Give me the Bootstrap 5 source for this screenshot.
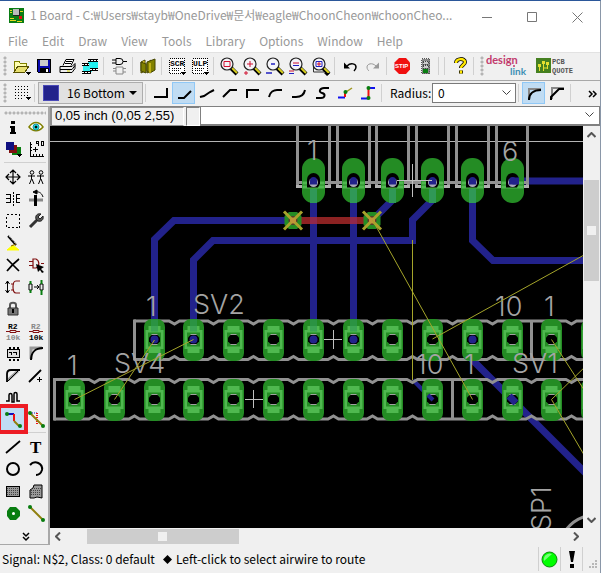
<!DOCTYPE html>
<html lang="en">
<head>
<meta charset="utf-8">
<meta name="viewport" content="width=device-width, initial-scale=1">
<title>1 Board</title>
<link href="https://cdn.jsdelivr.net/npm/bootstrap@5.3.0/dist/css/bootstrap.min.css" rel="stylesheet">
<style>
body{font-family:"Noto Sans CJK KR","Noto Sans",sans-serif;font-size:12px;line-height:16px;color:#000;background:#f0f0f0}
.win{border-top:1px solid #2b579a;border-right:1px solid #8a97a8}
.titlebar{height:29px;background:#fff;color:#999;padding-left:9px}
.titlebar .caption-text{margin-left:6px}
.titlebar button{width:45px;height:28px}
.menus{height:22px;background:#fff;color:#999;padding-left:8px;gap:14px}
.menus a{color:inherit;text-decoration:none}
.tbar{height:28px;border-top:1px solid #e2e2e2}
.tbar2{height:26px;border-top:1px solid #a8a8a8}
button{border:0;background:transparent;padding:0;color:#000}
.tb{width:23px;height:22px;flex:none;display:flex;align-items:center;justify-content:center}
.tb.on{background:#c0dcf3;border:1px solid #90c8f6}
.tb svg,.tp svg{width:20px;height:20px;display:block;overflow:visible}
svg{fill:none;stroke:#000;flex:none}
svg.ns{stroke:none}
.px{shape-rendering:crispEdges}
.vs{width:6px;height:18px;flex:none;background:linear-gradient(90deg,transparent 2px,#d0d0d0 2px,#d0d0d0 3px,transparent 3px)}
.grip{width:9px;height:20px;flex:none;background:radial-gradient(circle at 2px 2px,#b4b4b4 1px,transparent 2px) 3px 0/4px 4px repeat-y}
.layer{width:105px;height:22px;background:#e1e1e1;border:1px solid #adadad;padding-left:4px}
.swatch{width:16px;height:16px;background:#22228b;border:1px solid #4a4ab8;flex:none}
select{appearance:none;border-radius:0;outline:0;color:#000}
.layer select{border:0;background:url("data:image/svg+xml,%3Csvg xmlns='http://www.w3.org/2000/svg' width='8' height='4'%3E%3Cpath d='M0 0h8L4 4z'/%3E%3C/svg%3E") no-repeat right 5px center;padding-left:8px;min-width:0}
.radius-label{padding-left:5px;width:47px;white-space:nowrap}
.radius-box{width:84px;height:20px;border:1px solid #7a7a7a;padding:0 5px;background:#fff url("data:image/svg+xml,%3Csvg xmlns='http://www.w3.org/2000/svg' width='9' height='6'%3E%3Cpath d='M.5.5l4 4 4-4' fill='none' stroke='%23444'/%3E%3C/svg%3E") no-repeat right 4px center}
.palette{width:50px;flex:none;border-top:1px solid #a0a0a0;border-right:2px solid #a8a8a8;border-bottom:1px solid #a8a8a8;padding-left:1px}
.hgrip{width:42px;height:9px;background:radial-gradient(circle at 2px 2px,#b4b4b4 1px,transparent 2px) 0 4px/4px 4px repeat-x;margin-left:3px}
.tp{width:23px;height:22px;display:flex;align-items:center;justify-content:center}
.tp.on{background:#c0dcf3}
.hs{height:6px;width:42px;background:linear-gradient(transparent 2px,#d0d0d0 2px,#d0d0d0 3px,transparent 3px);margin-left:3px}
.marked{outline:4px solid #ed1c24;position:relative}
.cmd{height:20px;border-top:1px solid #808080}
.coord{width:134px;border:1px solid #909090;border-left-width:2px;border-right-color:#fff;font:13px/16px "Liberation Sans",sans-serif;padding-left:3px;white-space:pre}
.gapbox{width:14px;border:1px solid #808080;border-right-color:#fff;border-bottom-color:#fff;margin-left:2px}
.entry{background:#fff;border:1px solid #808080;border-bottom-width:2px;border-top-width:0}
.entry input{border:0;outline:0;min-width:0;background:transparent}
.fit{min-width:0;min-height:0}
.board{background:#000;overflow:hidden}
.board svg{width:100%;height:100%;display:block}
.vbar{width:17px;flex:none;padding:6px 0 5px}
.hbar{height:17px;flex:none;padding:0 21px 0 5px}
.thumb{background:#cdcdcd}
.vbar .thumb{width:15px;height:26%;margin-top:42px}
.hbar .thumb{height:15px;width:29%;margin-left:26px}
.nub{width:9px;height:9px;background:#f0f0f0;display:block}
.statusline{height:28px;padding-left:2px}
.statusline .cell{width:22px;height:24px;border-left:1px solid #d0d0d0}
.statusline .cell:last-child{width:18px}
.t{stroke:#22228b;stroke-width:7}
.aw{stroke:#a5a52a;stroke-width:1}
.silk{stroke:#919191;stroke-width:3}
.lbl{fill:#a4a4a4;stroke:none;font:300 27px Inter,"Liberation Sans",sans-serif}
.mini{font:bold 8px "Liberation Mono",monospace;fill:#000;stroke:none}
.dim{fill:#888}
.stop-t{font:bold 6px "Liberation Sans",sans-serif;fill:#fff;stroke:none}
.dl-a,.dl-b{font:bold 11px/1 Lato,"Liberation Sans",sans-serif;fill:#c23a6c}
.dl-b{font-size:10px;fill:#3e8fb4}
.pq{font:bold 7px/1 "Liberation Mono",monospace;fill:#555}
.big-t{font:bold 17px "Liberation Serif",serif;fill:#000;stroke:none}
</style>
<script src="https://cdn.jsdelivr.net/npm/bootstrap@5.3.0/dist/js/bootstrap.bundle.min.js"></script>
</head>
<body>
<svg width="0" height="0" class="position-absolute">
<defs>
<g id="lens"><path d="M12 12l6 6" stroke="#000" stroke-width="4"/><path d="M13 12l5 5" stroke="#d8d020" stroke-width="2"/><circle cx="8" cy="8" r="6" fill="#f4f4f8" stroke="#222" stroke-width="1.2"/></g>
<g id="pad"><rect x="-10.5" y="-20.5" width="21" height="42" rx="8" fill="#248c24" stroke="none"/><path d="M-6-13.500H6v4h3v19H6v4H-6v-4h-3v-19h3z" fill="#4fb84f" stroke="none"/><rect x="-6.500" y="-7" width="13" height="14" fill="#248c24" stroke="none"/><path d="M-3-5.500h6v11h-6z" fill="#a0a0a0" stroke="none"/><path d="M-3-4.500h6l2.500 2.500v4l-2.500 2.500h-6l-2.500-2.500v-4z" fill="#000" stroke="none"/></g>
<g id="lug"><rect x="-11.500" y="-22.500" width="23" height="45" rx="11" fill="#248c24" stroke="none"/><path d="M-11 2.500h22M-11 6.500h22" stroke="#4fb84f" stroke-width="3"/><path d="M-6.500 7v-8a6.500 6.500 0 0 1 13 0v4l-2 4z" fill="#000" stroke="none"/><circle cy="2" r="4.500" fill="#a9a9b9" stroke="none"/><path d="M-3.500 2v-2a3.500 3.500 0 0 1 7 0v4h-7z" fill="#22228b" stroke="none"/></g>
<g id="via"><path d="M-4-8.500h8l4.500 4v9l-4.500 4h-8l-4.500-4v-9z" fill="#248c24" stroke="none"/><circle r="4.500" fill="#5a3a2a" stroke="none"/><path d="M-9-9L9 9M9-9L-9 9" stroke="#a8a22c" stroke-width="3"/><circle r="3" fill="#c0963a" stroke="none"/></g>
<g id="trk"><path d="M-3.500-20h7v12h-7z" fill="#309858" stroke="none"/></g>
<g id="dot"><circle r="4" fill="#22228b" stroke="none"/></g>
</defs>
</svg>

<div class="win vh-100 d-flex flex-column overflow-hidden">
<header class="titlebar d-flex align-items-center">
  <svg class="px ns" width="15" height="15" viewBox="0 0 15 15"><path fill="#0a7d14" d="M0 0h15v15H0z"/><path fill="#bbb" d="M4 1h6v6H4z"/><path d="M1 2.500h2M1 4.500h2M1 10.500h4M1 12.500h6M8 13.500h5M11 3.500h3" stroke="#e8d820"/><path fill="#e01010" d="M10 8h3v3h-3z"/><path stroke="#222" d="M4 7.500h7M10.500 1v7"/></svg>
  <span class="caption-text text-nowrap flex-grow-1">1 Board - C:₩Users₩stayb₩OneDrive₩문서₩eagle₩ChoonCheon₩choonCheo...</span>
  <button aria-label="Minimize"><svg width="11" height="11"><path d="M0 5.500h10" stroke="#777"/></svg></button>
  <button aria-label="Maximize"><svg width="11" height="11"><path d="M.5.5h9v9h-9z" stroke="#777"/></svg></button>
  <button aria-label="Close"><svg width="11" height="11"><path d="M.5.5l10 10M10.500.5l-10 10" stroke="#777"/></svg></button>
</header>
<nav class="menus d-flex align-items-center"><a href="#">File</a><a href="#">Edit</a><a href="#">Draw</a><a href="#">View</a><a href="#">Tools</a><a href="#">Library</a><a href="#">Options</a><a href="#">Window</a><a href="#">Help</a></nav>

<div class="tbar d-flex align-items-center" role="toolbar" aria-label="Actions">
  <span class="grip"></span>
  <button class="tb" aria-label="Open"><svg viewBox="0 0 20 20" class="px"><path d="M3 16V5h5l1 2h6v3" fill="#ffffb0" stroke="#808000"/><path d="M3 16l4-6h11l-4 6z" fill="#e8e070" stroke="#554f00"/><path d="M14 16h6l-3 3z" fill="#000" stroke="none"/></svg></button>
  <button class="tb" aria-label="Save"><svg viewBox="0 0 20 20" class="px"><path d="M3.500 3.500h13v13h-12l-1-1z" fill="#0a0ab0"/><path d="M6 4h8v6H6z" fill="#ccc" stroke="none"/><path d="M6 12h9v5H6z" fill="#000" stroke="none"/><path d="M12 13h2v3h-2z" fill="#fff" stroke="none"/></svg></button>
  <button class="tb" aria-label="Print"><svg viewBox="0 0 20 20"><path d="M6 9.500l3-6h8l-3 6" fill="#fff"/><path d="M9 5.500h6M8 7.500h6"/><path d="M3 10.500h12l3-3v5l-3 4H3z" fill="#eee"/><path d="M3 13.500h12l3-4M5 16.500h8"/><path d="M10 15h3" stroke="#cc0"/></svg></button>
  <button class="tb" aria-label="CAM"><svg viewBox="0 0 20 20" class="px"><path d="M8 3h10v9H8z" fill="#20f0f0" stroke="none"/><path d="M3 8h9v8H3z" fill="#30f0f0" stroke="none"/><path d="M8 4.500h10" stroke-width="3"/><path d="M8 4.500h10" stroke="#fff" stroke-dasharray="2 1"/><path d="M2 8.500h7M2 16.500h9M10 13.500h8" stroke-width="3"/><path d="M2 8.500h7M2 16.500h9M10 13.500h8" stroke="#fff" stroke-dasharray="2 1"/></svg></button>
  <span class="vs"></span>
  <button class="tb" aria-label="Schematic"><svg viewBox="0 0 20 20"><path d="M7 2.500h4a3 3 0 0 1 0 6H7zM3 4h4M3 7h4M14 5.500h4"/><path d="M7 11h7v7H7zM4 12.500h3M4 15h3M14 12.500h3M14 16h3" stroke="#888"/></svg></button>
  <span class="vs"></span>
  <button class="tb" aria-label="Library"><svg viewBox="0 0 20 20"><path d="M3 6l4-2v11l-4 2zM9 7l4-3v11l-4 2z" fill="#ffe030" stroke="#444400"/><path d="M3 6l5 2v9l-5-2zM9 6l8-3v11l-5 3-3-2z" fill="#808000" stroke="#444400"/><path d="M12 7v10" stroke="#ffe030"/></svg></button>
  <span class="vs"></span>
  <button class="tb" aria-label="Script"><svg viewBox="0 0 20 20" class="px"><path d="M2.500 2.500h15v15h-15z" fill="#fff" stroke-dasharray="1 1"/><path d="M5 12.500h9M5 14.500h7" stroke-dasharray="1 1"/><text class="mini" x="3" y="10">SCR</text><path d="M13 16h6l-3 3z" fill="#000" stroke="none"/></svg></button>
  <button class="tb" aria-label="ULP"><svg viewBox="0 0 20 20" class="px"><path d="M2.500 2.500h15v15h-15z" fill="#fff" stroke-dasharray="1 1"/><path d="M5 12.500h9M5 14.500h7" stroke-dasharray="1 1"/><text class="mini" x="3" y="10">ULP</text><path d="M13 16h6l-3 3z" fill="#000" stroke="none"/></svg></button>
  <span class="vs"></span>
  <button class="tb" aria-label="Zoom fit"><svg viewBox="0 0 20 20"><use href="#lens"/><path d="M5 5.500h6v5H5z" stroke="#d01030"/></svg></button>
  <button class="tb" aria-label="Zoom in"><svg viewBox="0 0 20 20"><use href="#lens"/><path d="M5 8h6M8 5v6M2 17h4M4 15v4" stroke="#d01030"/></svg></button>
  <button class="tb" aria-label="Zoom out"><svg viewBox="0 0 20 20"><use href="#lens"/><path d="M6 8h4M1 17h6" stroke="#2020c0" stroke-width="1.500"/></svg></button>
  <button class="tb" aria-label="Redraw"><svg viewBox="0 0 20 20"><use href="#lens"/><path d="M5 7h6M1 15h5" stroke="#d01030"/><path d="M5 9.500h6M1 17.500h5" stroke="#2020c0"/></svg></button>
  <button class="tb" aria-label="Zoom select"><svg viewBox="0 0 20 20"><path d="M2.500 10v6h11" stroke="#333"/><use href="#lens"/><path d="M5 5.500h6v5H5z" stroke="#2020c0"/><path d="M7 7h2v2H7z" stroke="#d01030"/><path d="M13 17h6l-3 3z" fill="#000" stroke="none"/></svg></button>
  <span class="vs"></span>
  <button class="tb" aria-label="Undo"><svg viewBox="0 0 20 20"><path d="M7 10c4-4 9-2 9 1 0 2-1 3-2 4" stroke-width="1.500"/><path d="M4 6.500v6h6z" fill="#000" stroke="none"/></svg></button>
  <button class="tb" aria-label="Redo"><svg viewBox="0 0 20 20"><path d="M13 10c-4-4-9-2-9 1 0 2 1 3 2 4" stroke="#999"/><path d="M16 6.500v6h-6z" fill="#999" stroke="none"/></svg></button>
  <span class="vs"></span>
  <button class="tb" aria-label="Stop"><svg viewBox="0 0 20 20"><path d="M7 2h7l4 4.500v7L14 18H7l-4.500-4.500v-7z" fill="#f01010" stroke="none"/><text x="3" y="12" class="stop-t">STIP</text></svg></button>
  <button class="tb" aria-label="Go"><svg viewBox="0 0 20 20" class="px"><path d="M6.500 2.500h8v15h-8z" fill="#888" stroke="#555" stroke-dasharray="1 1"/><path d="M8 5h5v3H8zM8 9h5v3H8z" fill="#ccc" stroke="#444" stroke-dasharray="1 1"/><circle cx="10.500" cy="15" r="2.500" fill="#087d10" stroke="none"/></svg></button>
  <span class="vs"></span><span class="vs"></span>
  <button class="tb" aria-label="Help"><svg viewBox="0 0 20 20"><path d="M6 7c0-5 9-5 9-1 0 3-4 3-4 6M11 14.500v3" stroke="#000" stroke-width="4"/><path d="M6 7c0-5 9-5 9-1 0 3-4 3-4 6M11 14.500v3" stroke="#ffe800" stroke-width="2.500"/></svg></button>
  <span class="vs"></span>
  <span class="grip"></span>
  <button aria-label="design link"><svg class="ns d-block" width="46" height="26" viewBox="0 0 46 26"><text x="0" y="11" class="dl-a">design</text><text x="24" y="22" class="dl-b">link</text><circle cx="28" cy="13" r="1" fill="#c23a6c"/></svg></button>
  <button class="ms-1" aria-label="PCB Quote"><svg class="ns d-block" width="42" height="20" viewBox="0 0 42 20"><path fill="#458020" d="M0 2h15v15H0z"/><path d="M3.500 15v-5M7.500 15V8M11.500 13V8M7.500 12h4" stroke="#e4e030"/><path d="M2 8h3v3H2zM6 5h3v3H6zM10 6h3v3h-3z" fill="#e4e030"/><text x="16" y="8" class="pq">PCB</text><text x="16" y="17" class="pq">QUOTE</text></svg></button>
</div>

<div class="tbar2 d-flex align-items-center" role="toolbar" aria-label="Route options">
  <span class="grip"></span>
  <button class="tb" aria-label="Grid"><svg viewBox="0 0 20 20" class="px"><path d="M4 3.500h14M4 6.500h14M4 9.500h14M4 12.500h14M4 15.500h9" stroke-dasharray="1 2"/><path d="M14 14h6l-3 3z" fill="#000" stroke="none"/></svg></button>
  <span class="vs"></span>
  <div class="layer d-flex align-items-center"><span class="swatch"></span><select class="flex-grow-1" aria-label="Layer"><option>16 Bottom</option></select></div>
  <span class="vs"></span>
  <button class="tb" aria-label="Bend 0"><svg viewBox="0 0 20 20"><path d="M3 14h13V5" stroke-width="2"/></svg></button>
  <button class="tb on" aria-label="Bend 1"><svg viewBox="0 0 20 20"><path d="M4 15h6l7-7" stroke-width="2"/></svg></button>
  <button class="tb" aria-label="Bend 2"><svg viewBox="0 0 20 20"><path d="M3 14l4-1 6-4 4-2" stroke-width="2"/></svg></button>
  <button class="tb" aria-label="Bend 3"><svg viewBox="0 0 20 20"><path d="M3 14l7-7h7" stroke-width="2"/></svg></button>
  <button class="tb" aria-label="Bend 4"><svg viewBox="0 0 20 20"><path d="M4 15V7h12" stroke-width="2"/></svg></button>
  <button class="tb" aria-label="Bend 5"><svg viewBox="0 0 20 20"><path d="M3 14c1-5 5-7 8-7h5" stroke-width="2"/></svg></button>
  <button class="tb" aria-label="Bend 6"><svg viewBox="0 0 20 20"><path d="M3 14h4c4 0 8-2 9-7" stroke-width="2"/></svg></button>
  <button class="tb" aria-label="Bend 7"><svg viewBox="0 0 20 20"><path d="M17 5h-5c-4 0-6 4-2 5s3 5-1 5H4" stroke-width="2"/></svg></button>
  <button class="tb" aria-label="Route single"><svg viewBox="0 0 20 20"><path d="M3 14.500h7" stroke="#1010f0" stroke-width="2"/><path d="M10 14V9" stroke="#f01010" stroke-width="2"/><path d="M11 9l6-4" stroke="#a09820" stroke-width="1.500"/><circle cx="10.500" cy="9" r="2" fill="#087d10" stroke="none"/></svg></button>
  <button class="tb" aria-label="Route multi"><svg viewBox="0 0 20 20"><path d="M3 15.500h7M11 5h6" stroke="#1010f0" stroke-width="2"/><path d="M10.500 15V5" stroke="#f01010" stroke-width="2"/><circle cx="10.500" cy="5" r="2" fill="#087d10" stroke="none"/><circle cx="10.500" cy="15" r="2" fill="#087d10" stroke="none"/></svg></button>
  <span class="vs"></span>
  <label class="radius-label" for="radius">Radius:</label>
  <select id="radius" class="radius-box"><option>0</option></select>
  <span class="vs"></span>
  <button class="tb on" aria-label="Round miter"><svg viewBox="0 0 20 20"><path d="M5 16V6h12" stroke="#888" stroke-width="2"/><path d="M5 17c0-6 4-10 12-10" stroke-width="2"/></svg></button>
  <button class="tb" aria-label="Straight miter"><svg viewBox="0 0 20 20"><path d="M5 16V5h12" stroke="#888" stroke-width="2"/><path d="M4 17v-3l8-8h5" stroke-width="2"/></svg></button>
  <span class="vs"></span>
  <button class="tb ms-auto" aria-label="More"><svg viewBox="0 0 20 20"><path d="M10 8l3 3-3 3M14 8l3 3-3 3" stroke-width="1.500"/></svg></button>
</div>

<main class="flex-grow-1 d-flex fit">
<aside class="palette" aria-label="Tools">
  <div class="hgrip"></div>
  <div class="d-flex flex-wrap">
  <button class="tp" aria-label="Info"><svg viewBox="0 0 20 20" class="px"><path d="M8 4h4v3H8zM7 9h5v6h1v2H7v-2h1v-4H7z" fill="#000" stroke="none"/></svg></button>
  <button class="tp" aria-label="Show"><svg viewBox="0 0 20 20"><path d="M3 10c4-6 10-6 14 0-4 5-10 5-14 0z" fill="#fff" stroke="#808000" stroke-width="1.500"/><circle cx="10" cy="10" r="3" fill="#20e8e8" stroke="#2090a0"/><circle cx="10" cy="10" r="1" fill="#000"/></svg></button>
  <button class="tp" aria-label="Display"><svg viewBox="0 0 20 20" class="px ns"><path d="M9 8h9v8H9z" fill="#087d10"/><path d="M6 6h8v8H6z" fill="#801010"/><path d="M3 3h8v8H3z" fill="#101080"/><path d="M13 15h6l-3 3z" fill="#000"/></svg></button>
  <button class="tp" aria-label="Mark"><svg viewBox="0 0 20 20" class="px"><path d="M4 3v14h14M4 5h2M4 8h2M4 11h2M7 17v-2M10 17v-2M13 17v-2M16 17v-2M7 10.500h5M9.500 8v5"/><path d="M10.500 2.500h2v2h-2zM12.500 3v4M15.500 2.500h2v4h-2z"/></svg></button>
  </div>
  <div class="hs"></div>
  <div class="d-flex flex-wrap">
  <button class="tp" aria-label="Move"><svg viewBox="0 0 20 20"><path d="M3 10h14M10 3v14M6 7l-3 3 3 3M14 7l3 3-3 3M7 6l3-3 3 3M7 14l3 3 3-3" stroke-width="1.200"/></svg></button>
  <button class="tp" aria-label="Copy"><svg viewBox="0 0 20 20"><circle cx="6" cy="5.500" r="1.800"/><circle cx="15" cy="5.500" r="1.800"/><path d="M2 9h7M11 9h7M5.500 8v4l-2 5M6 12l2 5M14.500 8v4l-2 5M15 12l2 5"/></svg></button>
  <button class="tp" aria-label="Mirror"><svg viewBox="0 0 20 20" class="px"><path d="M10 3v14" stroke-dasharray="2 1"/><path d="M3 5.500h4v8H3M3 9.500h4M17 5.500h-4v8h4M17 9.500h-4"/></svg></button>
  <button class="tp" aria-label="Rotate"><svg viewBox="0 0 20 20"><path d="M3 11h14" stroke="#888" stroke-width="3"/><path d="M9.500 6v11" stroke-width="3"/><path d="M9 3c5-1 7 2 8 5" /><path d="M7 3l4-2v4z" fill="#000"/></svg></button>
  <button class="tp" aria-label="Group"><svg viewBox="0 0 20 20" class="px"><path d="M3.500 3.500h13v13h-13z" stroke-dasharray="2 2"/></svg></button>
  <button class="tp" aria-label="Change"><svg viewBox="0 0 20 20"><path d="M4 16l7-7" stroke="#333" stroke-width="3"/><path d="M17 5l-3 3-2-2 3-3c-4-1-6 2-5 5l2 2c3 1 6-1 5-5z" fill="#555" stroke="#222"/></svg></button>
  <button class="tp" aria-label="Paste"><svg viewBox="0 0 20 20"><path d="M10 12l6 5H4z" fill="#ff0" stroke="#ff0"/><path d="M5 3l8 9" stroke-width="2"/><path d="M6 3l7 8" stroke="#fff" stroke-dasharray="1 1"/><path d="M8 13l5-2" stroke="#806000"/></svg></button>
  <span class="tp"></span>
  <button class="tp" aria-label="Delete"><svg viewBox="0 0 20 20"><path d="M4 4l12 12M16 4C11 8 8 11 4 16" stroke-width="1.700"/></svg></button>
  <button class="tp" aria-label="Add"><svg viewBox="0 0 20 20"><path d="M7 4h3a5 5 0 0 1 0 9H7zM3 6.500h4M3 10.500h4M15 8.500h3" stroke="#801010" stroke-width="1.200"/><path d="M10 9l8 3-3 2 3 3-2 1-2-3-2 2z" fill="#000" stroke="none"/></svg></button>
  <button class="tp" aria-label="Pinswap"><svg viewBox="0 0 20 20"><path d="M4.500 4v12M2.500 7l2-3 2 3M2.500 13l2 3 2-3"/><path d="M17 4h-4c-4 0-4 12 0 12h4M8 7h3M8 13h3" stroke="#801010" stroke-width="1.200"/></svg></button>
  <button class="tp" aria-label="Replace"><svg viewBox="0 0 20 20"><path d="M3 7h3v6H3zM14 7h3v6h-3zM8 10h5M11 8l2 2-2 2"/><path d="M4.500 4v3M4.500 13v3M15.500 3v4M15.500 13v5" stroke="#087d10" stroke-width="2"/></svg></button>
  <button class="tp" aria-label="Lock"><svg viewBox="0 0 20 20"><path d="M7 9V6c0-3 6-3 6 0v3" stroke="#555" stroke-width="2"/><path d="M5 9h10v7H5z" fill="#777" stroke="#333"/><path d="M10 10v4" stroke-width="2"/></svg></button>
  <span class="tp"></span>
  <button class="tp" aria-label="Name"><svg viewBox="0 0 20 20"><path d="M3 10.500h14" stroke="#801010"/><path d="M7 9.500h6v2H7z" fill="#f0f0f0" stroke="#801010"/><text class="mini" x="5" y="8">R2</text><text class="mini dim" x="3" y="19">10k</text></svg></button>
  <button class="tp" aria-label="Value"><svg viewBox="0 0 20 20"><path d="M3 10.500h14" stroke="#801010"/><path d="M7 9.500h6v2H7z" fill="#f0f0f0" stroke="#801010"/><text class="mini dim" x="5" y="8">R2</text><text class="mini" x="3" y="19">10k</text></svg></button>
  <button class="tp" aria-label="Smash"><svg viewBox="0 0 20 20" class="px"><path d="M4 6.500h12v8H4zM6 9h2v3M10 9h3v3" fill="#ddd"/><path d="M6 4.500h2M10 4.500h2M14 4.500h2M6 17h2M10 17h2M14 17h2" stroke-width="2"/></svg></button>
  <button class="tp" aria-label="Miter"><svg viewBox="0 0 20 20"><path d="M5 16V5h11" stroke="#999" stroke-width="3"/><path d="M5 17C5 10 9 5 17 5" stroke-width="2"/></svg></button>
  <button class="tp" aria-label="Split"><svg viewBox="0 0 20 20"><path d="M5 15L15 6" stroke="#999" stroke-width="3"/><path d="M4 17V9c0-3 2-4 4-4h9" stroke-width="1.800"/><path d="M4 17L16 5"/></svg></button>
  <button class="tp" aria-label="Optimize"><svg viewBox="0 0 20 20"><path d="M3 17L15 5" stroke-width="1.800"/><path d="M11 14.500h5M13.500 12v5"/></svg></button>
  <button class="tp" aria-label="Meander"><svg viewBox="0 0 20 20"><path d="M3 14h3V8c0-2 3-2 3 0v7h2V7c0-2 3-2 3 0v7h3" stroke-width="1.500"/></svg></button>
  <span class="tp"></span>
  <button class="tp on marked" aria-label="Route"><svg viewBox="0 0 20 20"><path d="M4 5h7" stroke="#1010c0" stroke-width="2"/><path d="M11 5v7" stroke="#f01010" stroke-width="2"/><path d="M11 12l5 5" stroke="#908010" stroke-width="2"/><circle cx="4" cy="5" r="2" fill="#087d10" stroke="none"/><circle cx="17" cy="17" r="2" fill="#087d10" stroke="none"/></svg></button>
  <button class="tp" aria-label="Ripup"><svg viewBox="0 0 20 20"><path d="M4 4h8" stroke="#1010c0" stroke-dasharray="1 1"/><path d="M11 4v11" stroke="#f01010" stroke-width="2" stroke-dasharray="1 1"/><path d="M4 4l13 13" stroke="#908010" stroke-width="2"/><circle cx="4" cy="4" r="2" fill="#087d10" stroke="none"/><circle cx="17" cy="17" r="2" fill="#087d10" stroke="none"/></svg></button>
  </div>
  <div class="hs"></div>
  <div class="d-flex flex-wrap">
  <button class="tp" aria-label="Line"><svg viewBox="0 0 20 20"><path d="M3 16L17 4" stroke-width="1.800"/></svg></button>
  <button class="tp" aria-label="Text"><svg viewBox="0 0 20 20"><text x="4" y="16" class="big-t">T</text></svg></button>
  <button class="tp" aria-label="Circle"><svg viewBox="0 0 20 20"><circle cx="10" cy="10" r="6" stroke-width="2"/></svg></button>
  <button class="tp" aria-label="Arc"><svg viewBox="0 0 20 20"><path d="M4 6c5-6 13-1 12 5-1 3-3 5-6 5" stroke-width="2"/></svg></button>
  <button class="tp" aria-label="Rectangle"><svg viewBox="0 0 20 20" class="px"><path d="M3.500 5h13v10h-13z" fill="#999"/><path d="M4 7h12M4 9h12M4 11h12M4 13h12" stroke="#444" stroke-dasharray="1 1"/></svg></button>
  <button class="tp" aria-label="Polygon"><svg viewBox="0 0 20 20"><path d="M4 17V9l3-2 1-3h8v13l-5-1-3 1z" fill="#999"/><path d="M5 9.500h10M5 11.500h10M5 13.500h10M8 7.500h7" stroke="#444" stroke-dasharray="1 1"/></svg></button>
  <button class="tp" aria-label="Via"><svg viewBox="0 0 20 20"><path d="M7 4h6l4 4v5l-4 4H7l-3-4V8z" fill="#087d10" stroke="none"/><circle cx="10.500" cy="10.500" r="1.500" fill="#fff" stroke="none"/></svg></button>
  <button class="tp" aria-label="Signal"><svg viewBox="0 0 20 20"><path d="M4 4l13 13" stroke="#908010" stroke-width="2"/><circle cx="4" cy="4" r="2" fill="#087d10" stroke="none"/><circle cx="17" cy="17" r="2" fill="#087d10" stroke="none"/></svg></button>
  </div>
  <button class="tp w-100" aria-label="More tools"><svg viewBox="0 0 20 20"><path d="M8 8l3 3 3-3M8 12l3 3 3-3" stroke-width="1.500"/></svg></button>
</aside>

<section class="flex-grow-1 d-flex flex-column fit">
  <div class="cmd d-flex">
    <div class="coord">0,05 inch (0,05 2,55)</div>
    <div class="gapbox"></div>
    <div class="entry d-flex flex-grow-1 align-items-center"><input class="flex-grow-1" type="text" aria-label="Command"><button class="px-1" aria-label="History"><svg class="d-block" width="11" height="6"><path d="M1.500.5l4 4 4-4" stroke="#444"/></svg></button></div>
  </div>
  <div class="d-flex flex-grow-1 fit">
    <div class="board flex-grow-1 fit">
    <svg role="img" aria-label="Board layout"><g transform="translate(-50 -126)">
      <g class="t">
        <path d="M154.500 340V239.500L174 220.500H293"/><path d="M193.500 340V260L213 240.500H412.500V220L432.500 200V180"/>
        <path d="M313.500 180V340M353.500 180V340M392.500 180V200L372.500 220M472.500 180V240.500L493 260.500H640M512.500 181H640"/>
        <path d="M472.500 340V360L600 487.500"/><path d="M413 380L432.500 400" stroke-width="4"/>
      </g>
      <path d="M293 220.500H372" stroke="#8c2222" stroke-width="7"/><path d="M310 220.500h7M350 220.500h7" stroke="#90284c" stroke-width="7"/>
      <path d="M50 141.500H640" stroke="#b4b4b4"/>
      <g class="silk">
        <path d="M297.500 126V188M329.500 126V188M337.500 126V188M369.500 126V188M376.500 126V188M408.500 126V188M416.500 126V188M448.500 126V188M456.500 126V188M488.500 126V188M496.500 126V188M527.500 126V188M296 182.500H529"/>
        <path stroke="#b0b0b0" d="M296 186.500H331M336 186.500H371M375 186.500H410M415 186.500H450M455 186.500H490M495 186.500H529"/>
        <path d="M134.500 319.500V360.500M531.500 321V360M54.500 378V420.500M452.500 380V419"/>
        <path d="M134 321H169l5.500 3 5-3H208l5.500 3 5-3H248l5.500 3 5-3H288l5.500 3 5-3H328l5.500 3 5-3H367l5.500 3 5-3H407l5.500 3 5-3H447l5.500 3 5-3H487l5.500 3 5-3H566l5.500 3 5-3H640"/>
        <path d="M134 359.500H169l5.500-3 5 3H208l5.500-3 5 3H248l5.500-3 5 3H288l5.500-3 5 3H328l5.500-3 5 3H367l5.500-3 5 3H407l5.500-3 5 3H447l5.500-3 5 3H487l5.500-3 5 3H566l5.500-3 5 3H640"/>
        <path d="M54 379.500H89l5.500 3 5-3H129l5.500 3 5-3H169l5.500 3 5-3H208l5.500 3 5-3H248l5.500 3 5-3H288l5.500 3 5-3H328l5.500 3 5-3H367l5.500 3 5-3H407l5.500 3 5-3H487l5.500 3 5-3H526l5.500 3 5-3H566l5.500 3 5-3H640"/>
        <path d="M54 419H89l5.500-3 5 3H129l5.500-3 5 3H169l5.500-3 5 3H208l5.500-3 5 3H248l5.500-3 5 3H288l5.500-3 5 3H328l5.500-3 5 3H367l5.500-3 5 3H407l5.500-3 5 3H487l5.500-3 5 3H526l5.500-3 5 3H566l5.500-3 5 3H640"/>
        <path d="M566 530Q573 520 586 516"/>
      </g>
      <g><use href="#lug" x="313.500" y="180.500"/><use href="#lug" x="353.500" y="180.500"/><use href="#lug" x="392.500" y="180.500"/><use href="#lug" x="432.500" y="180.500"/><use href="#lug" x="472.500" y="180.500"/><use href="#lug" x="512.500" y="180.500"/><path d="M512.500 181H519" class="t"/></g>
      <path d="M313.500 189v14M353.500 189v14M392.500 189v14M432.500 189v14M472.500 189v14" stroke="#309858" stroke-width="7"/>
      <g><use href="#pad" x="154.500" y="339.500"/><use href="#pad" x="193.500" y="339.500"/><use href="#pad" x="233.500" y="339.500"/><use href="#pad" x="273.500" y="339.500"/><use href="#pad" x="313.500" y="339.500"/><use href="#pad" x="353.500" y="339.500"/><use href="#pad" x="392.500" y="339.500"/><use href="#pad" x="432.500" y="339.500"/><use href="#pad" x="472.500" y="339.500"/><use href="#pad" x="512.500" y="339.500"/><use href="#pad" x="551.500" y="339.500"/><use href="#pad" x="591.500" y="339.500"/></g>
      <g><use href="#pad" x="74.500" y="399.500"/><use href="#pad" x="114.500" y="399.500"/><use href="#pad" x="154.500" y="399.500"/><use href="#pad" x="193.500" y="399.500"/><use href="#pad" x="233.500" y="399.500"/><use href="#pad" x="273.500" y="399.500"/><use href="#pad" x="313.500" y="399.500"/><use href="#pad" x="353.500" y="399.500"/><use href="#pad" x="392.500" y="399.500"/><use href="#pad" x="432.500" y="399.500"/><use href="#pad" x="472.500" y="399.500"/><use href="#pad" x="512.500" y="399.500"/><use href="#pad" x="551.500" y="399.500"/><use href="#pad" x="591.500" y="399.500"/></g>
      <g opacity=".6"><use href="#trk" x="154.500" y="339.500"/><use href="#trk" x="193.500" y="339.500"/><use href="#trk" x="313.500" y="339.500"/><use href="#trk" x="353.500" y="339.500"/></g>
      <g><use href="#dot" x="154.500" y="339.500"/><use href="#dot" x="193.500" y="339.500"/><use href="#dot" x="313.500" y="339.500"/><use href="#dot" x="353.500" y="339.500"/><use href="#dot" x="472.500" y="339.500"/></g>
      <path d="M509 396l7 7" class="t"/><path d="M428 395l5 5" stroke="#22228b" stroke-width="4"/>
      <g stroke="#c0c0c0"><path d="M397 180.500H432M412.500 164V197M324 339.500H342M333.500 330V349M245 399.500H263M253.500 390V408"/></g>
      <g class="lbl"><text x="307" y="160">1</text><text x="502" y="161">6</text><text x="146" y="316">1</text><text x="193" y="314">SV2</text><text x="114" y="373">SV4</text><text x="67" y="375">1</text><text x="495" y="316">10</text><text x="544" y="316">1</text><text x="416" y="374">10</text><text x="464" y="374">1</text><text x="512" y="373">SV1</text><text transform="translate(551 531) rotate(-90)">SP1</text></g>
      <use href="#via" x="293" y="220.500"/><use href="#via" x="372" y="220.500"/>
      <g class="aw"><path d="M412.500 240V380M372.500 220L472.500 399.500M432.500 339L640 224M154.500 340L114.500 399.500M193.500 339.500L74.500 399.500M551.500 339.500L590 399M551.500 399.500L590 362M551.500 399.500L590 465"/></g>
    </g></svg>
    </div>
    <div class="vbar d-flex flex-column align-items-center">
      <svg width="9" height="6"><path d="M.5 5l4-4 4 4" stroke="#555" stroke-width="2"/></svg>
      <button class="thumb d-flex align-items-center justify-content-center" aria-label="Scroll vertically"><span class="nub"></span></button>
      <svg class="mt-auto" width="9" height="6"><path d="M.5 1l4 4 4-4" stroke="#555" stroke-width="2"/></svg>
    </div>
  </div>
  <div class="hbar d-flex align-items-center">
    <svg width="6" height="9"><path d="M5 .5l-4 4 4 4" stroke="#555" stroke-width="2"/></svg>
    <button class="thumb d-flex align-items-center justify-content-center" aria-label="Scroll horizontally"><span class="nub"></span></button>
    <svg class="ms-auto" width="6" height="9"><path d="M1 .5l4 4-4 4" stroke="#555" stroke-width="2"/></svg>
  </div>
</section>
</main>

<footer class="statusline d-flex align-items-center flex-shrink-0">
  <span>Signal: N$2, Class: 0 default</span>
  <svg class="ns ms-2 me-1" width="9" height="9"><path fill="#000" d="M4.500 0L9 4.500 4.500 9 0 4.500z"/></svg>
  <span class="flex-grow-1">Left-click to select airwire to route</span>
  <span class="cell d-flex align-items-center justify-content-center"><svg width="17" height="17"><circle cx="8.500" cy="8.500" r="7.500" fill="#0f0" stroke="#0a8a0a"/><path d="M3 10a6 6 0 0 1 8-7z" fill="#7f7" stroke="none"/></svg></span>
  <span class="cell d-flex align-items-center justify-content-center"><svg class="ns" width="6" height="17"><path fill="#000" d="M0 0h6L4 11H2zM1 13h4v4H1z"/></svg></span>
  <span class="cell d-flex align-items-end justify-content-end"><svg class="ns" width="12" height="11"><path fill="#b8b8b8" d="M7 0h2v2H7zM4 3h2v2H4zM7 3h2v2H7zM1 6h2v2H1zM4 6h2v2H4zM7 6h2v2H7z"/></svg></span>
</footer>
</div>
</body>
</html>
